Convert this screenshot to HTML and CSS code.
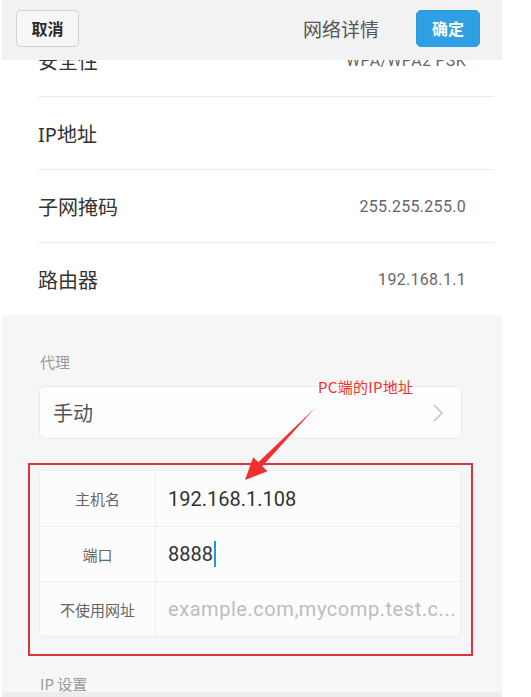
FILE: index.html
```html
<!DOCTYPE html>
<html lang="zh-CN">
<head>
<meta charset="utf-8">
<title>网络详情</title>
<link rel="stylesheet" href="styles.css">
</head>
<body>
<div class="app">
  <header class="topbar">
    <button class="btn btn-cancel">取消</button>
    <div class="spacer"></div>
    <div class="title">网络详情</div>
    <button class="btn btn-ok">确定</button>
  </header>

  <section class="list">
    <div class="row"><span class="label">安全性</span><span class="value">WPA/WPA2 PSK</span></div>
    <div class="row"><span class="label">IP地址</span><span class="value"></span></div>
    <div class="row"><span class="label">子网掩码</span><span class="value">255.255.255.0</span></div>
    <div class="row last"><span class="label">路由器</span><span class="value">192.168.1.1</span></div>
  </section>

  <section class="gray">
    <div class="section-title">代理</div>
    <div class="select-card">
      <span class="select-text">手动</span>
      <svg class="chev" width="12" height="20" viewBox="0 0 12 20"><polyline points="2,2 10,10 2,18" fill="none" stroke="#c4c4c4" stroke-width="1.6"/></svg>
    </div>

    <div class="redbox">
      <div class="form-card">
        <div class="frow"><div class="flabel">主机名</div><div class="fvalue">192.168.1.108</div></div>
        <div class="frow"><div class="flabel">端口</div><div class="fvalue">8888<span class="caret"></span></div></div>
        <div class="frow"><div class="flabel">不使用网址</div><div class="fvalue placeholder">example.com,mycomp.test.c...</div></div>
      </div>
    </div>

    <div class="section-title ip">IP 设置</div>
  </section>
  <div class="bottom-edge"></div>

  <div class="note">PC端的IP地址</div>
  <svg class="arrow" width="531" height="697" viewBox="0 0 531 697">
    <polygon points="315,408 262.3,466.2 267.5,471.2 245,480 253.2,457.2 258.3,462.3" fill="#f0302e"/>
  </svg>
</div>
</body>
</html>
```

FILE: styles.css
```css
* { box-sizing: border-box; }
html, body { margin: 0; padding: 0; background: #ffffff; }
body {
  width: 531px;
  height: 697px;
  overflow: hidden;
  font-family: "Noto Sans", "Noto Sans CJK SC", sans-serif;
}
.app {
  width: 500px;
  margin-left: 2px;
  height: 697px;
  background: #f6f6f6;
  position: relative;
  overflow: hidden;
}
.topbar {
  position: relative;
  z-index: 1;
  height: 60px;
  background: #f2f2f2;
  display: flex;
  align-items: flex-start;
  padding: 10px 22px 0 14px;
}
.btn {
  height: 37px;
  border-radius: 5px;
  font-family: "Noto Sans CJK SC", sans-serif;
  font-size: 16px;
  font-weight: 700;
  padding: 0;
  line-height: 35px;
}
.btn-cancel {
  width: 63px;
  background: #f6f6f6;
  border: 1px solid #d2d2d2;
  color: #2a2a2a;
}
.btn-ok {
  width: 64px;
  background: #2fa0e3;
  border: 1px solid #2b9bde;
  color: #ffffff;
}
.spacer { flex: 1; }
.title {
  font-family: "Noto Sans CJK SC", sans-serif;
  font-size: 19px;
  color: #555555;
  line-height: 37px;
  margin-right: 37px;
}
.list {
  background: #ffffff;
  margin-top: -36px;
}
.row {
  height: 73px;
  margin-left: 36px;
  margin-right: 8px;
  padding-right: 28px;
  border-bottom: 1px solid #ececec;
  display: flex;
  align-items: center;
  justify-content: space-between;
}
.row.last { height: 72px; border-bottom: none; }
.label {
  font-family: "Noto Sans", "Noto Sans CJK SC", sans-serif;
  font-size: 20px;
  color: #333333;
}
.value {
  font-family: Roboto, "Noto Sans", sans-serif;
  font-size: 16px;
  color: #666666;
  letter-spacing: 0.3px;
}
.gray {
  background: #f6f6f6;
  padding: 37px 40px 0 37px;
}
.section-title {
  font-family: "Noto Sans CJK SC", sans-serif;
  font-size: 15px;
  line-height: 20px;
  color: #9a9a9a;
  margin-left: 1px;
}
.select-card {
  margin-top: 14px;
  height: 53px;
  background: #fdfdfd;
  border: 1px solid #e9e9e9;
  border-radius: 6px;
  display: flex;
  align-items: center;
  justify-content: space-between;
  padding: 0 17px 0 13px;
}
.select-text {
  font-family: "Noto Sans CJK SC", sans-serif;
  font-size: 20px;
  color: #555555;
}
.chev { display: block; }
.redbox {
  margin: 24px -11px 0 -11px;
  border: 2px solid #d8353d;
  padding: 5px 10px 17px 9px;
}
.form-card {
  background: #fcfcfc;
  border: 1px solid #ededed;
  border-radius: 5px;
}
.frow {
  height: 55px;
  display: flex;
  border-top: 1px solid #ededed;
}
.frow:first-child { border-top: none; }
.flabel {
  width: 116px;
  border-right: 1px solid #ededed;
  display: flex;
  align-items: center;
  justify-content: center;
  font-family: "Noto Sans CJK SC", sans-serif;
  font-size: 15px;
  color: #666666;
}
.fvalue {
  flex: 1;
  display: flex;
  align-items: center;
  padding-left: 12px;
  font-family: Roboto, "Noto Sans", sans-serif;
  font-size: 20px;
  color: #333333;
  white-space: nowrap;
  overflow: hidden;
}
.fvalue.placeholder {
  font-size: 20px;
  letter-spacing: 0.55px;
  color: #bdbdbd;
}
.caret {
  display: inline-block;
  width: 2px;
  height: 26px;
  background: #1d9ad8;
  margin-left: 1px;
}
.section-title.ip { margin-top: 18px; }
.bottom-edge {
  position: absolute;
  left: 0;
  right: 0;
  bottom: 0;
  height: 5px;
  background: #ededed;
}
.note {
  position: absolute;
  left: 316px;
  top: 377px;
  font-family: "Noto Sans CJK SC", sans-serif;
  font-size: 15px;
  line-height: 20px;
  color: #f3322f;
  letter-spacing: 0.3px;
}
.arrow {
  position: absolute;
  left: -2px;
  top: 0;
  pointer-events: none;
}
```
